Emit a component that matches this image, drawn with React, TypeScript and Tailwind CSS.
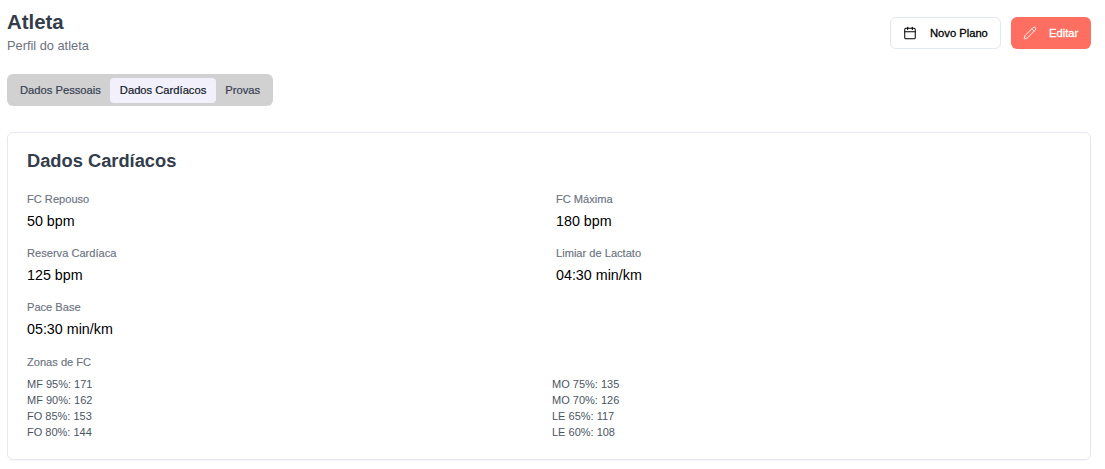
import React from 'react';
import { Calendar, Pencil } from 'lucide-react';

const fields = [
  [
    { label: 'FC Repouso', value: '50 bpm' },
    { label: 'FC Máxima', value: '180 bpm' },
  ],
  [
    { label: 'Reserva Cardíaca', value: '125 bpm' },
    { label: 'Limiar de Lactato', value: '04:30 min/km' },
  ],
  [{ label: 'Pace Base', value: '05:30 min/km' }],
];

const zonesLeft = ['MF 95%: 171', 'MF 90%: 162', 'FO 85%: 153', 'FO 80%: 144'];
const zonesRight = ['MO 75%: 135', 'MO 70%: 126', 'LE 65%: 117', 'LE 60%: 108'];

const App: React.FC = () => {
  return (
    <div className="min-h-[469px] bg-white px-[7px] pt-[10px] font-['Liberation_Sans',sans-serif]">
      <div className="flex items-start justify-between pr-[7px]">
        <div>
          <h1 className="text-[20.4px] leading-[24px] font-bold text-[#333d4b]">Atleta</h1>
          <p className="mt-[3px] text-[12.8px] leading-[18px] text-[#6b7280]">Perfil do atleta</p>
        </div>
        <div className="mt-[7px] flex gap-[10px]">
          <button className="flex h-[32px] w-[111px] items-center rounded-[6px] border border-[#e2e8f0] bg-white pl-[12px] text-[11.2px] font-normal text-black [-webkit-text-stroke:0.3px]">
            <Calendar size={14} strokeWidth={1.75} className="mr-[13px]" />
            Novo Plano
          </button>
          <button className="flex h-[32px] w-[80px] items-center rounded-[6px] bg-[#ff6f61] pl-[12px] text-[11.2px] font-normal text-white [-webkit-text-stroke:0.3px]">
            <Pencil size={14} strokeWidth={1.5} className="mr-[12px]" />
            Editar
          </button>
        </div>
      </div>

      <div className="mt-[19px] flex h-[32px] w-[266px] items-center rounded-[6px] bg-[#d1d1d1] px-[4px] text-[11.2px] font-medium whitespace-nowrap text-[#374151] [-webkit-text-stroke:0.2px]">
        <button className="px-[9px]">Dados Pessoais</button>
        <button className="flex h-[25px] items-center rounded-[4px] bg-[#f1f0fb] px-[10px] text-[#111827]">Dados Cardíacos</button>
        <button className="px-[9px]">Provas</button>
      </div>

      <section className="mt-[26px] mr-[7px] h-[328px] rounded-[6px] border border-[#e6e8f0] pt-[16px] pr-[21px] pl-[19px] shadow-[0_1px_1px_rgba(0,0,0,0.04)]">
        <h2 className="text-[18.3px] leading-[24px] font-bold text-[#333d4b]">Dados Cardíacos</h2>
        <div className="mt-[18px] flex flex-col gap-[12px]">
          {fields.map((row) => (
            <div key={row[0].label} className="grid grid-cols-2 gap-4">
              {row.map((f) => (
                <div key={f.label}>
                  <div className="text-[11.1px] leading-[16px] font-medium text-[#6b7280] [-webkit-text-stroke:0.15px]">{f.label}</div>
                  <div className="mt-[3px] text-[14.3px] leading-[23px] text-black">{f.value}</div>
                </div>
              ))}
            </div>
          ))}
        </div>
        <div className="mt-[13px] text-[11.1px] leading-[16px] font-medium text-[#6b7280] [-webkit-text-stroke:0.15px]">Zonas de FC</div>
        <div className="mt-[6px] grid grid-cols-2 gap-2 text-[11px] leading-[16px] text-[#4b5563]">
          <div>
            {zonesLeft.map((z) => (
              <div key={z}>{z}</div>
            ))}
          </div>
          <div>
            {zonesRight.map((z) => (
              <div key={z}>{z}</div>
            ))}
          </div>
        </div>
      </section>
    </div>
  );
};

export default App;
